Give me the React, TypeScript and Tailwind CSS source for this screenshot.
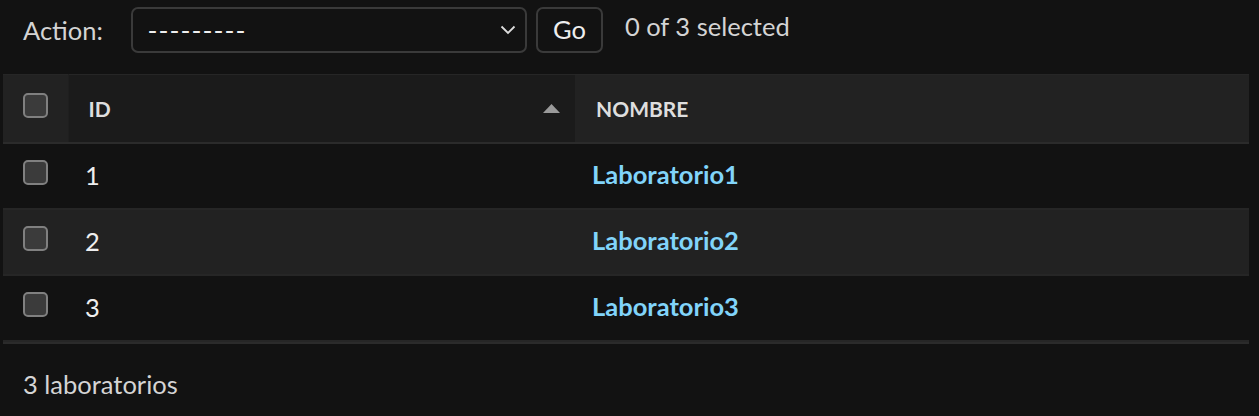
import React from "react";

type Lab = { id: number; nombre: string };

const labs: Lab[] = [
  { id: 1, nombre: "Laboratorio1" },
  { id: 2, nombre: "Laboratorio2" },
  { id: 3, nombre: "Laboratorio3" },
];

const Checkbox: React.FC = () => (
  <span className="block w-[25px] h-[25px] rounded-[5px] border-2 border-[#808080] bg-[#3b3b3b]" />
);

const App: React.FC = () => {
  return (
    <div
      className="w-full h-[416px] bg-[#121212] text-[#eeeeee] overflow-hidden"
      style={{ fontFamily: "Lato, 'Open Sans', sans-serif" }}
    >
      {/* actions bar */}
      <div className="flex items-center h-[46px] mt-[7px] pl-[23px] text-[25.5px]">
        <span className="text-[#d4d4d4] leading-none mt-[2px]">Action:</span>
        <div className="ml-[28px] w-[396px] h-[46px] flex items-center justify-between rounded-[7px] border-2 border-[#3a3a3a] pl-[15px] pr-[9px]">
          <span className="leading-none tracking-[2px] font-['DejaVu_Sans',sans-serif] text-[25px]">---------</span>
          <svg width="16" height="10" viewBox="0 0 16 10" fill="none">
            <path d="M1.5 1.5 L8 8 L14.5 1.5" stroke="#dddddd" strokeWidth="1.8" />
          </svg>
        </div>
        <button className="ml-[9px] w-[67px] h-[46px] rounded-[7px] border-2 border-[#3a3a3a] leading-none text-[#eeeeee]">
          Go
        </button>
        <span className="ml-[22px] mb-[6px] leading-none text-[#d4d4d4]">0 of 3 selected</span>
      </div>

      {/* results table */}
      <table className="mt-[21px] ml-[3px] w-[1246px] border-collapse table-fixed">
        <thead>
          <tr className="h-[68px] border-t border-[#262626] border-b-2 border-b-[#2b2b2b]">
            <th className="w-[65px] bg-[#222222] p-0 align-middle">
              <div className="pl-[20px] pb-[5px]">
                <Checkbox />
              </div>
            </th>
            <th className="w-[507px] bg-[#1b1b1b] p-0 text-left align-middle border-l border-[#1f1f1f]">
              <div className="flex items-center justify-between pl-[20px] pr-[15px] text-[21px] font-bold text-[#dedede] leading-none">
                <span>ID</span>
                <svg width="17" height="9" viewBox="0 0 17 9">
                  <path d="M0 9 L8.5 0 L17 9 Z" fill="#9a9a9a" />
                </svg>
              </div>
            </th>
            <th className="bg-[#222222] p-0 pl-[21px] text-left align-middle text-[21px] font-bold text-[#dedede] leading-none">
              NOMBRE
            </th>
          </tr>
        </thead>
        <tbody>
          {labs.map((lab, i) => (
            <tr
              key={lab.id}
              className={`h-[66px] border-b-2 border-[#262626] ${i % 2 === 1 ? "bg-[#222222]" : ""}`}
            >
              <td className="p-0 align-middle">
                <div className="pl-[20px] pb-[7px]">
                  <Checkbox />
                </div>
              </td>
              <td className="p-0 pl-[17px] align-middle text-[25.5px] leading-none">{lab.id}</td>
              <td className="p-0 pl-[17px] align-middle">
                <a className="text-[25.5px] leading-none font-bold text-[#81d4fa]" href="#">
                  {lab.nombre}
                </a>
              </td>
            </tr>
          ))}
        </tbody>
      </table>
      <div className="ml-[3px] w-[1246px] h-[2px] bg-[#2b2b2b]" />

      <p className="mt-[28px] pl-[23px] text-[25.5px] leading-none text-[#d4d4d4]">3 laboratorios</p>
    </div>
  );
};

export default App;
